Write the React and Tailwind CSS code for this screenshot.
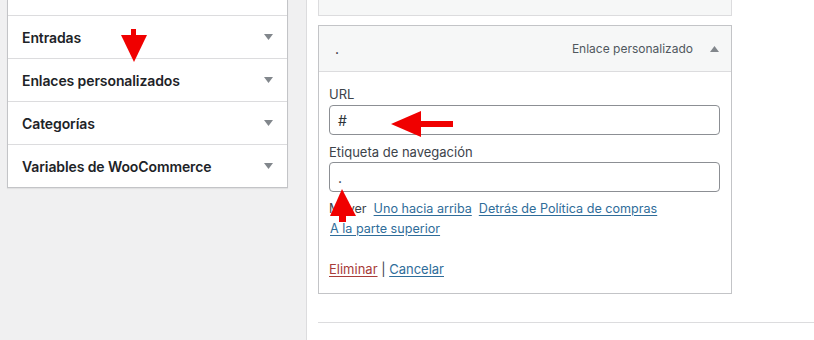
const sections = ["Entradas", "Enlaces personalizados", "Categorías", "Variables de WooCommerce"]

function Caret({ up = false, className = "" }) {
  return (
    <svg width="9" height="6" viewBox="0 0 9 6" className={className}>
      <path d={up ? "M0 6 L4.5 0 L9 6 Z" : "M0 0 L9 0 L4.5 6 Z"} fill="#82878c" />
    </svg>
  )
}

export default function App() {
  return (
    <div className="relative flex h-[340px] w-[814px] overflow-hidden bg-[#f0f0f1] font-['Inter','Liberation_Sans',sans-serif] text-[13px] text-[#3c434a]">
      {/* left column: accordion of menu item sources */}
      <div className="w-[306px] shrink-0 pl-[7px]">
        <div className="w-[281px] border-x border-b border-[#c3c4c7] bg-white shadow-[0_1px_1px_rgba(0,0,0,0.06)]">
          <div className="h-[16px] border-b border-[#dcdcde]" />
          {sections.map((s, i) => (
            <div
              key={s}
              className={
                i < sections.length - 1
                  ? "flex h-[43px] items-center justify-between border-b border-[#dcdcde] pl-[14px] pr-[14px]"
                  : "flex h-[42px] items-center justify-between pl-[14px] pr-[14px]"
              }
            >
              <span className="text-[14px] font-semibold tracking-[-0.1px] text-[#1d2327]">{s}</span>
              <Caret />
            </div>
          ))}
        </div>
      </div>

      {/* right column: menu structure */}
      <div className="flex-1 border-l border-[#dcdcde] bg-white pl-[11px]">
        <div className="h-[16px] w-[414px] border-x border-b border-[#dcdcde] bg-[#f6f7f7]" />

        <div className="mt-[9px] w-[414px] border border-[#c3c4c7]">
          <div className="flex h-[46px] items-center justify-between border-b border-[#dcdcde] bg-[#f6f7f7] pl-[16px] pr-[12px]">
            <span className="text-[14px] text-[#1d2327]">.</span>
            <div className="flex items-center gap-[17px]">
              <span className="text-[12px] text-[#50575e]">Enlace personalizado</span>
              <Caret up />
            </div>
          </div>

          <div className="bg-white pb-[14px] pl-[10px] pr-[11px] pt-[12px]">
            <div className="leading-[20px]">URL</div>
            <div className="mt-[1px] flex h-[30px] items-center rounded-[4px] border border-[#8c8f94] px-[8px] text-[14px] text-[#2c3338]">
              #
            </div>
            <div className="mt-[7px] leading-[20px]">Etiqueta de navegación</div>
            <div className="flex h-[30px] items-center rounded-[4px] border border-[#8c8f94] px-[8px] text-[14px] text-[#2c3338]">
              .
            </div>

            <div className="mt-[7px] flex gap-[7px] text-[12.6px] leading-[20px]">
              <span>Mover</span>
              <a className="text-[#2f6d9a] underline underline-offset-2">Uno hacia arriba</a>
              <a className="text-[#2f6d9a] underline underline-offset-2">Detrás de Política de compras</a>
            </div>
            <div className="pl-[1px] text-[12.6px] leading-[20px]">
              <a className="text-[#2f6d9a] underline underline-offset-2">A la parte superior</a>
            </div>

            <div className="mt-[20px] leading-[20px]">
              <a className="text-[#a83c39] underline underline-offset-2">Eliminar</a>
              <span className="text-[#3c434a]"> | </span>
              <a className="text-[#2f6d9a] underline underline-offset-2">Cancelar</a>
            </div>
          </div>
        </div>

        <div className="mt-[28px] border-t border-[#dcdcde]" />
      </div>

      {/* red annotation arrows drawn over the screenshot */}
      <svg className="pointer-events-none absolute inset-0" width="814" height="340">
        <g fill="#f00000">
          <rect x="131" y="29" width="5" height="8" />
          <polygon points="121,35 147,35 134,62" />
          <rect x="419" y="121" width="34" height="6" />
          <polygon points="391,124 421,111 421,137" />
          <rect x="339" y="214" width="7" height="8" />
          <polygon points="342,189 330,216 356,216" />
        </g>
      </svg>
    </div>
  )
}
